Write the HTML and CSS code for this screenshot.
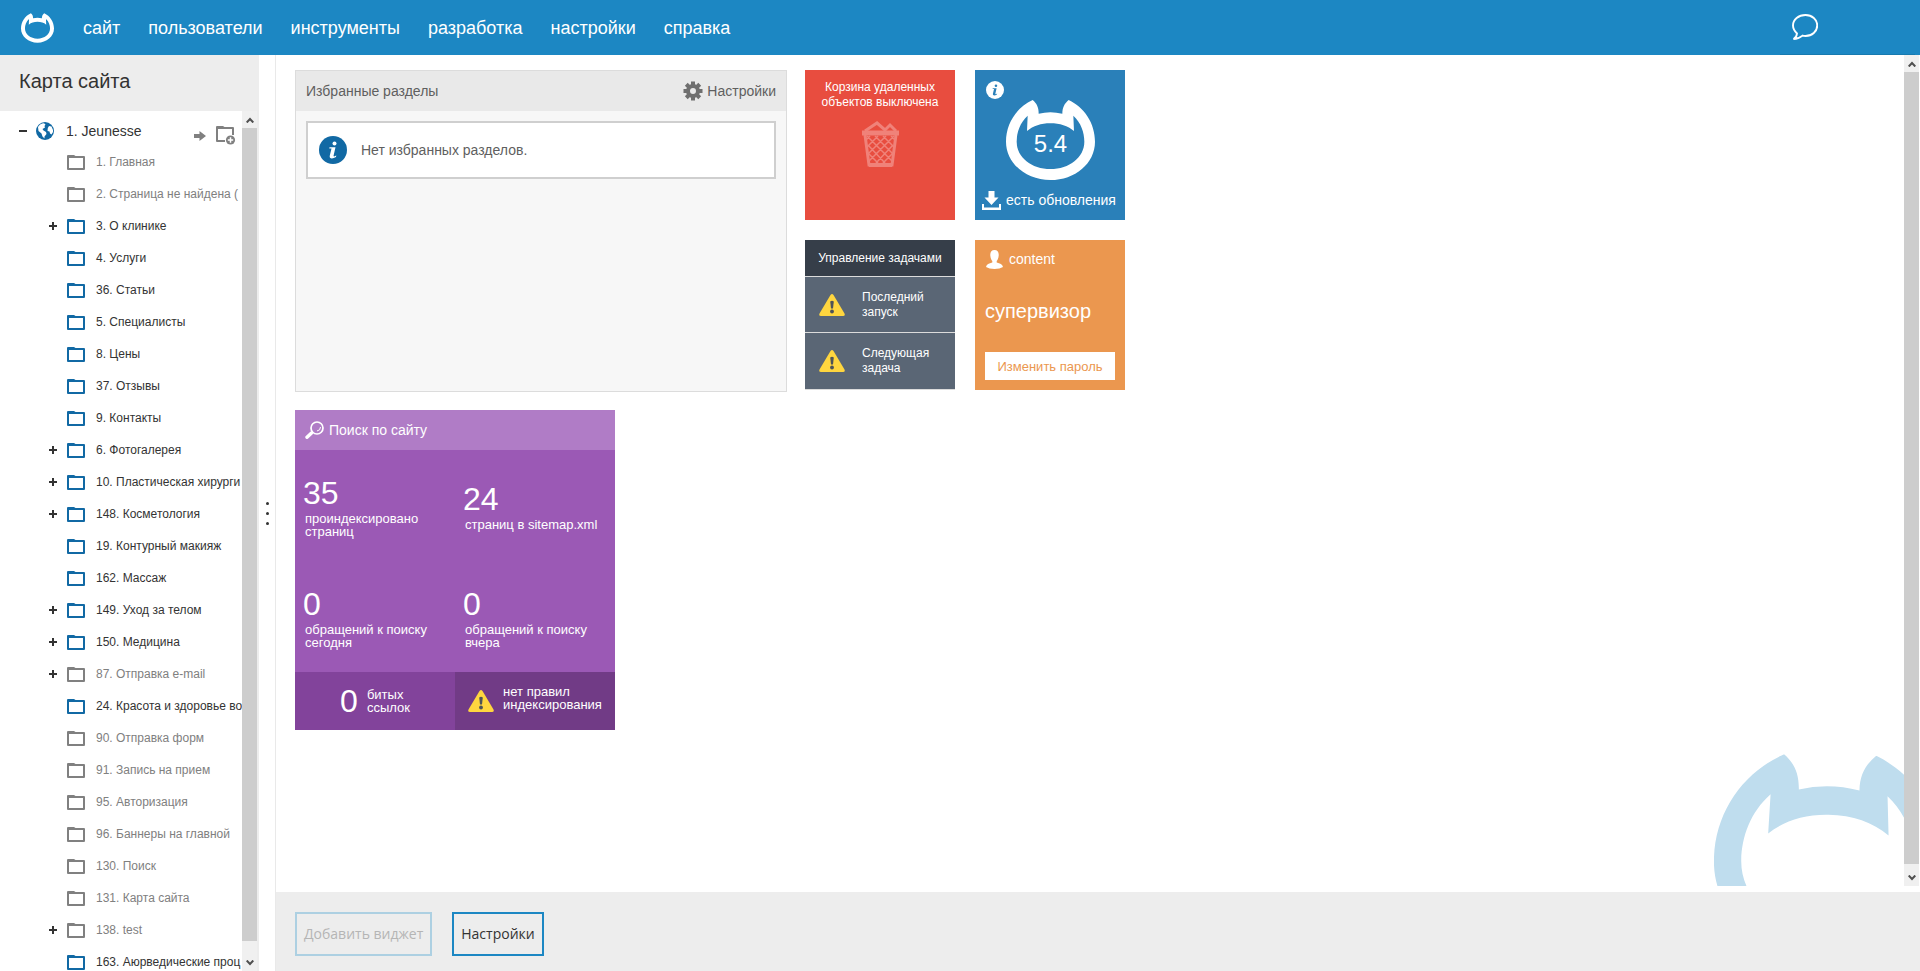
FILE: index.html
```html
<!DOCTYPE html>
<html lang="ru">
<head>
<meta charset="utf-8">
<title>Карта сайта</title>
<link rel="stylesheet" href="styles.css">
</head>
<body>
<svg class="defs" aria-hidden="true">
  <symbol id="cat" viewBox="0 0 267 240"><path fill-rule="evenodd" d="M80 0C92 10 98 22 98 41Q133 32 169 41C169 22 176 10 188 0C235 22 267 70 267 125C267 190 207 240 133.500 240C60 240 0 190 0 125C0 70 32 22 80 0ZM65 47L63 93C82 78 105 70 133 70C162 70 185 78 204 93L202 47C225 68 235 97 235 125C235 172 190 207 133.500 207C77 207 32 172 32 125C32 97 42 68 65 47Z"/></symbol>
  <symbol id="folder" viewBox="0 0 18 15"><path fill-rule="evenodd" d="M1 0H7L8.500 1H17Q18 1 18 2V14Q18 15 17 15H1Q0 15 0 14V1Q0 0 1 0ZM2 3V13H16V3Z"/></symbol>
  <symbol id="warn" viewBox="0 0 26 22"><path fill="#ffd63f" d="M11.500 1Q13 -1 14.500 1L25.500 19.500Q26.500 22 24 22H2Q-.5 22 .5 19.500Z"/><path fill="#4e5358" d="M11.200 7.500Q13 6 14.800 7.500L14 14.500H12Z"/><circle cx="13" cy="17.500" r="1.900" fill="#4e5358"/></symbol>
  <symbol id="up" viewBox="0 0 8 6"><path d="M.7 5.500L4 2L7.300 5.500" fill="none" stroke="#505050" stroke-width="2"/></symbol>
  <symbol id="down" viewBox="0 0 8 6"><path d="M.7 .5L4 4L7.300 .5" fill="none" stroke="#505050" stroke-width="2"/></symbol>
  <symbol id="info" viewBox="0 0 28 28"><circle cx="14" cy="14" r="14"/><circle class="i" cx="15.500" cy="7.500" r="2"/><path class="i" d="M10.500 11.300H16.500L14.500 20Q15 21 17.300 19.600L17 21Q13 23.300 11 21.800Q10.500 21 10.800 19.500L12.500 12.600L10.300 12.500Z"/></symbol>
</svg>
<header class="top">
  <svg class="logo" aria-hidden="true"><use href="#cat"/></svg>
  <nav class="menu">
    <a href="#">сайт</a><a href="#">пользователи</a><a href="#">инструменты</a><a href="#">разработка</a><a href="#">настройки</a><a href="#">справка</a>
  </nav>
  <div class="user">
    <button class="chat" aria-label="Сообщения"><svg viewBox="0 0 26 26" aria-hidden="true"><path d="M13.500 1C6.500 1 1 5.500 1 11.500C1 15 3 17.500 5 19.500Q4.500 23.500 1.500 25Q6.500 25 10.500 21.600Q12 22 13.500 22C20 22 25.200 17.500 25.200 11.500C25.200 5.500 20 1 13.500 1Z" fill="none" stroke="#fff" stroke-width="1.900"/></svg></button>
  </div>
</header>
<div class="body">
  <aside class="side">
    <h1 class="side-title">Карта сайта</h1>
    <div class="side-body">
      <div class="tree">
        <div class="root">
          <button class="tog minus" aria-label="Свернуть"></button>
          <svg class="globe" viewBox="0 0 18 18" aria-hidden="true"><circle cx="9" cy="9" r="9" fill="#1169a4"/><path fill="#fff" d="M2 5Q4 1.500 8 1.200L9.500 2.500L8.500 4L9 5.500L6.500 7L7.500 8.500L10 10L10.500 12L8.500 14.500V16.500L6.500 14.500L5.500 11.500L2.500 9ZM13 4L15.500 4.500L17 8V10L15.500 12.500L14 11.500L13.500 9.500L11.500 9L11.800 6Z"/></svg>
          <a href="#">1. Jeunesse</a>
          <span class="acts">
            <svg class="arrow" viewBox="0 0 12 10" aria-hidden="true"><path fill="#808080" d="M0 3H5.500V0L12 5L5.500 10V7H0Z"/></svg>
            <svg class="add" viewBox="0 0 20 19" aria-hidden="true"><path fill="#808080" fill-rule="evenodd" d="M1 0H7L8.500 1H17Q18 1 18 2V9H16V3H2V14H9V16H1Q0 16 0 15V1Q0 0 1 0Z"/><circle cx="14.500" cy="14" r="4.600" fill="#808080"/><path stroke="#fff" stroke-width="1.500" d="M14.500 11.300V16.700M11.800 14H17.200"/></svg>
          </span>
        </div>
        <ul class="items">
          <li class="off"><svg><use href="#folder"/></svg><a href="#">1. Главная</a></li>
          <li class="off"><svg><use href="#folder"/></svg><a href="#">2. Страница не найдена (</a></li>
          <li><button class="tog plus" aria-label="Развернуть"></button><svg><use href="#folder"/></svg><a href="#">3. О клинике</a></li>
          <li><svg><use href="#folder"/></svg><a href="#">4. Услуги</a></li>
          <li><svg><use href="#folder"/></svg><a href="#">36. Статьи</a></li>
          <li><svg><use href="#folder"/></svg><a href="#">5. Специалисты</a></li>
          <li><svg><use href="#folder"/></svg><a href="#">8. Цены</a></li>
          <li><svg><use href="#folder"/></svg><a href="#">37. Отзывы</a></li>
          <li><svg><use href="#folder"/></svg><a href="#">9. Контакты</a></li>
          <li><button class="tog plus" aria-label="Развернуть"></button><svg><use href="#folder"/></svg><a href="#">6. Фотогалерея</a></li>
          <li><button class="tog plus" aria-label="Развернуть"></button><svg><use href="#folder"/></svg><a href="#">10. Пластическая хирурги</a></li>
          <li><button class="tog plus" aria-label="Развернуть"></button><svg><use href="#folder"/></svg><a href="#">148. Косметология</a></li>
          <li><svg><use href="#folder"/></svg><a href="#">19. Контурный макияж</a></li>
          <li><svg><use href="#folder"/></svg><a href="#">162. Массаж</a></li>
          <li><button class="tog plus" aria-label="Развернуть"></button><svg><use href="#folder"/></svg><a href="#">149. Уход за телом</a></li>
          <li><button class="tog plus" aria-label="Развернуть"></button><svg><use href="#folder"/></svg><a href="#">150. Медицина</a></li>
          <li class="off"><button class="tog plus" aria-label="Развернуть"></button><svg><use href="#folder"/></svg><a href="#">87. Отправка e-mail</a></li>
          <li><svg><use href="#folder"/></svg><a href="#">24. Красота и здоровье во</a></li>
          <li class="off"><svg><use href="#folder"/></svg><a href="#">90. Отправка форм</a></li>
          <li class="off"><svg><use href="#folder"/></svg><a href="#">91. Запись на прием</a></li>
          <li class="off"><svg><use href="#folder"/></svg><a href="#">95. Авторизация</a></li>
          <li class="off"><svg><use href="#folder"/></svg><a href="#">96. Баннеры на главной</a></li>
          <li class="off"><svg><use href="#folder"/></svg><a href="#">130. Поиск</a></li>
          <li class="off"><svg><use href="#folder"/></svg><a href="#">131. Карта сайта</a></li>
          <li class="off"><button class="tog plus" aria-label="Развернуть"></button><svg><use href="#folder"/></svg><a href="#">138. test</a></li>
          <li><svg><use href="#folder"/></svg><a href="#">163. Аюрведические проц</a></li>
        </ul>
      </div>
      <div class="bar"><svg><use href="#up"/></svg><div class="thumb"></div><svg><use href="#down"/></svg></div>
    </div>
  </aside>
  <div class="split"><i></i><i></i><i></i></div>
  <main class="main">
    <div class="stage">
      <div class="desk">
        <svg class="mark" viewBox="0 0 190 133" aria-hidden="true"><g transform="rotate(1 114 103)"><use href="#cat" y="2" width="228" height="205"/></g></svg>
        <div class="grid">
          <section class="fav">
            <div class="fav-head"><h2>Избранные разделы</h2>
              <button class="gear"><svg viewBox="-10 -10 20 20" aria-hidden="true"><g fill="#6f6f6f"><path fill-rule="evenodd" d="M-7 0A7 7 0 1 0 7 0A7 7 0 1 0 -7 0ZM-3 0A3 3 0 1 1 3 0A3 3 0 1 1 -3 0Z"/><g id="teeth"><path d="M-2 -9.500H2V-6H-2ZM-2 6H2V9.500H-2ZM-9.500 -2H-6V2H-9.500ZM6 -2H9.500V2H6Z"/></g><use href="#teeth" transform="rotate(45)"/></g></svg>Настройки</button></div>
            <div class="note"><svg class="blue-i"><use href="#info"/></svg>Нет избранных разделов.</div>
          </section>
          <section class="trash">Корзина удаленных объектов выключена
            <svg viewBox="0 0 39 46" aria-hidden="true"><g fill="none" stroke="#f08279" stroke-width="2"><path stroke-width="3" d="M4 14L8 44H31L35 14"/><path stroke-width="5" d="M1 12H38" /><path stroke-width="3" d="M4 10L16 2L24 9L29 4L35 10"/><path stroke-width="4" d="M8 44H31"/><path stroke-width="1.500" d="M6 15L31 40M14 15L32 33M22 15L33 26M30 15L34 19M7 24L24 42M8 33L17 42M33 15L8 40M25 15L7 33M17 15L6 26M9 15L5 19M32 24L15 42M31 33L22 42"/></g></svg>
          </section>
          <section class="ver">
            <svg class="white-i"><use href="#info"/></svg>
            <div class="ring"><svg aria-hidden="true"><use href="#cat"/></svg><span>5.4</span></div>
            <a href="#" class="upd"><svg viewBox="0 0 19 19" aria-hidden="true"><path fill="#fff" d="M6.500 0H12.500V6.500H16.500L9.500 14L2.500 6.500H6.500ZM0 13H2V16.500H17V13H19V19H0Z"/></svg>есть обновления</a>
          </section>
          <section class="tasks">
            <h2>Управление задачами</h2>
            <div class="task"><svg><use href="#warn"/></svg><span>Последний запуск</span></div>
            <div class="task"><svg><use href="#warn"/></svg><span>Следующая задача</span></div>
          </section>
          <section class="acc">
            <div class="who"><svg viewBox="0 0 17 19" aria-hidden="true"><path fill="#fff" d="M8.500 0C5.500 0 4 2 4.300 5.500C4.500 8.500 5.500 10 6.300 11V12.500C3 13.300 .5 14.500 0 17Q3 19 8.500 19Q14 19 17 17C16.500 14.500 14 13.300 10.700 12.500V11C11.500 10 12.500 8.500 12.700 5.500C13 2 11.500 0 8.500 0Z"/></svg>content</div>
            <div class="role">супервизор</div>
            <button class="pass">Изменить пароль</button>
          </section>
          <section class="search">
            <h2><svg viewBox="0 0 19 18" aria-hidden="true"><circle cx="12" cy="7" r="6" fill="none" stroke="#fff" stroke-width="1.700"/><path fill="none" stroke="#fff" d="M15.500 6Q15.500 9.500 12 10"/><path stroke="#fff" stroke-width="3.400" stroke-linecap="round" d="M6.500 12L2 16.300"/></svg>Поиск по сайту</h2>
            <div class="stats">
              <div><b>35</b><span>проиндексировано страниц</span></div>
              <div><b>24</b><span>страниц в sitemap.xml</span></div>
              <div><b>0</b><span>обращений к поиску сегодня</span></div>
              <div><b>0</b><span>обращений к поиску вчера</span></div>
            </div>
            <div class="foot">
              <div class="broken"><b>0</b><span>битых<br>ссылок</span></div>
              <div class="rules"><svg><use href="#warn"/></svg><span>нет правил<br>индексирования</span></div>
            </div>
          </section>
        </div>
      </div>
      <div class="bar main-bar"><svg><use href="#up"/></svg><div class="thumb"></div><svg><use href="#down"/></svg></div>
    </div>
    <footer class="actions"><button disabled>Добавить виджет</button><button>Настройки</button></footer>
  </main>
</div>
</body>
</html>
```
FILE: styles.css
```css
* { box-sizing: border-box; }
body { margin: 0; height: 100vh; display: flex; flex-direction: column; overflow: hidden; background: #fff; color: #333; font: 12px/15px "Liberation Sans", Arial, sans-serif; }
a { color: inherit; text-decoration: none; }
h1, h2, ul { margin: 0; padding: 0; font-weight: normal; list-style: none; }
b { font-weight: normal; }
button { font: inherit; color: inherit; background: none; border: 0; padding: 0; }
svg { display: block; flex: none; }
.defs { position: absolute; width: 0; height: 0; }

.top { flex: none; height: 55px; display: flex; align-items: center; background: #1c87c3; color: #fff; padding: 0 5px 0 21px; }
.logo { width: 33px; height: 30px; fill: #fff; }
.menu { display: flex; gap: 28px; margin-left: 29px; font-size: 18px; line-height: 22px; }
.user { margin-left: auto; width: 135px; height: 55px; border-bottom: 1px solid #177aaf; padding: 14px 12px; }
.chat svg { width: 26px; height: 26px; }

.body { flex: 1; min-height: 0; display: flex; }
.side { width: 259px; display: flex; flex-direction: column; background: #ededed; }
.side-title { flex: none; height: 56px; padding: 14px 19px; font-size: 20px; line-height: 24px; }
.side-body { flex: 1; min-height: 0; display: flex; padding-right: 2px; }
.tree { flex: 1; min-width: 0; overflow: hidden; background: #fff; }
.root { height: 35px; display: flex; align-items: center; padding: 5px 6px 0 19px; font-size: 14px; }
.tog { flex: none; width: 8px; height: 8px; background: linear-gradient(#333, #333) center / 8px 2px no-repeat; }
.plus { background: linear-gradient(#333, #333) center / 8px 2px no-repeat, linear-gradient(#333, #333) center / 2px 8px no-repeat; margin-left: -18px; margin-right: 10px; }
.globe { width: 18px; height: 18px; margin: 0 12px 0 9px; }
.acts { margin-left: auto; display: flex; align-items: center; gap: 10px; padding-top: 9px; }
.arrow { width: 12px; height: 10px; }
.add { width: 20px; height: 19px; }
.items { padding-left: 67px; }
.items li { height: 32px; display: flex; align-items: center; white-space: nowrap; }
.items a { padding-top: 1px; }
.items svg { width: 18px; height: 15px; fill: #1169a4; margin-right: 11px; }
.items .off { color: #808080; }
.items .off svg { fill: #808080; }

.bar { flex: none; width: 15px; display: flex; flex-direction: column; align-items: center; background: #f0f0f0; padding: 6px 0 5px; }
.bar svg { width: 8px; height: 6px; }
.thumb { flex: 1; width: 15px; background: #cdcdcd; margin: 5px 0 19px; }
.main-bar .thumb { margin-bottom: 11px; }

.split { width: 17px; border-right: 1px solid #e9e9e9; display: flex; flex-direction: column; align-items: center; justify-content: center; gap: 7px; }
.split i { width: 3px; height: 3px; border-radius: 50%; background: #333; }

.main { flex: 1; min-width: 0; display: flex; flex-direction: column; }
.stage { flex: 1; min-height: 0; display: flex; padding: 0 1px 6px 0; }
.desk { flex: 1; position: relative; padding: 15px 19px; }
.mark { position: absolute; right: 0; bottom: 0; width: 190px; height: 133px; fill: #bfddee; }
.grid { display: grid; grid-template-columns: 490px 150px 150px; grid-template-rows: 150px 150px 320px; gap: 20px; color: #fff; }

.fav { grid-row: span 2; width: 492px; height: 322px; background: #f7f7f7; border: 1px solid #dcdcdc; color: #5f5f5f; font-size: 14px; }
.fav-head { height: 40px; display: flex; align-items: center; justify-content: space-between; background: #e9e9e9; padding: 0 10px; }
.fav h2 { font-size: 14px; }
.gear { display: flex; align-items: center; gap: 4px; }
.gear svg { width: 20px; height: 20px; }
.note { height: 58px; margin: 10px; padding: 0 11px; display: flex; align-items: center; gap: 14px; background: #fff; border: 2px solid #cfcfcf; }
.note svg { width: 28px; height: 28px; }
.blue-i { fill: #1169a4; color: #fff; }
.i { fill: currentColor; }

.trash { background: #e84d3f; padding: 10px 12px; text-align: center; }
.trash svg { width: 39px; height: 46px; margin: 11px auto; }
.ver { background: #2a80b9; padding: 11px 7px; position: relative; }
.white-i { position: absolute; left: 11px; top: 11px; width: 18px; height: 18px; fill: #fff; color: #2a80b9; }
.ring { display: grid; place-items: center; width: 89px; height: 80px; margin: 19px auto 11px 24px; }
.ring > * { grid-area: 1 / 1; }
.ring svg { width: 89px; height: 80px; fill: #fff; }
.ring span { font-size: 24px; line-height: 28px; padding-top: 8px; }
.upd { display: flex; align-items: center; gap: 5px; font-size: 14px; white-space: nowrap; }
.upd svg { width: 19px; height: 19px; }

.tasks { grid-column: 2; background: #5a6675; }
.tasks h2 { height: 36px; background: #363e49; font-size: 12px; line-height: 36px; text-align: center; white-space: nowrap; }
.task { height: 56px; border-top: 1px solid #dcdcdc; display: flex; align-items: center; gap: 17px; padding: 0 14px; }
.task svg { width: 26px; height: 22px; }
.task:last-child { border-bottom: 1px solid #dcdcdc; height: 58px; }
.acc { background: #eb974f; padding: 10px; display: flex; flex-direction: column; }
.who { display: flex; align-items: center; gap: 6px; font-size: 14px; padding-left: 1px; }
.who svg { width: 17px; height: 19px; }
.role { font-size: 20px; line-height: 24px; margin-top: 30px; }
.pass { margin-top: auto; height: 28px; background: #fff; color: #eb974f; font-size: 13px; }

.search { width: 320px; display: flex; flex-direction: column; background: #9b59b5; font-size: 13px; line-height: 13px; }
.search h2 { height: 40px; display: flex; align-items: center; gap: 5px; padding: 0 10px; background: #b07cc6; font-size: 14px; }
.search h2 svg { width: 19px; height: 18px; }
.search b { font-size: 32px; line-height: 38px; }
.stats { flex: 1; display: grid; grid-template-columns: 1fr 1fr; grid-template-rows: 1fr 1fr; align-items: center; }
.stats div { padding: 0 8px; display: flex; flex-direction: column; }
.stats span { padding-left: 2px; }
.foot { display: grid; grid-template-columns: 1fr 1fr; height: 58px; }
.foot div { display: flex; align-items: center; justify-content: center; gap: 9px; }
.broken { background: #82439b; }
.rules { background: #713b86; }
.rules svg { width: 26px; height: 22px; }
.rules span { padding-bottom: 6px; }

.actions { flex: none; height: 79px; display: flex; align-items: center; gap: 20px; padding: 5px 19px 0; background: #ededed; font: 14px/20px "Open Sans", sans-serif; }
.actions button { height: 44px; border: 2px solid #1c87c3; padding: 0 7px; }
.actions button:disabled { color: #b5b5b5; border-color: #add0e2; }
```
